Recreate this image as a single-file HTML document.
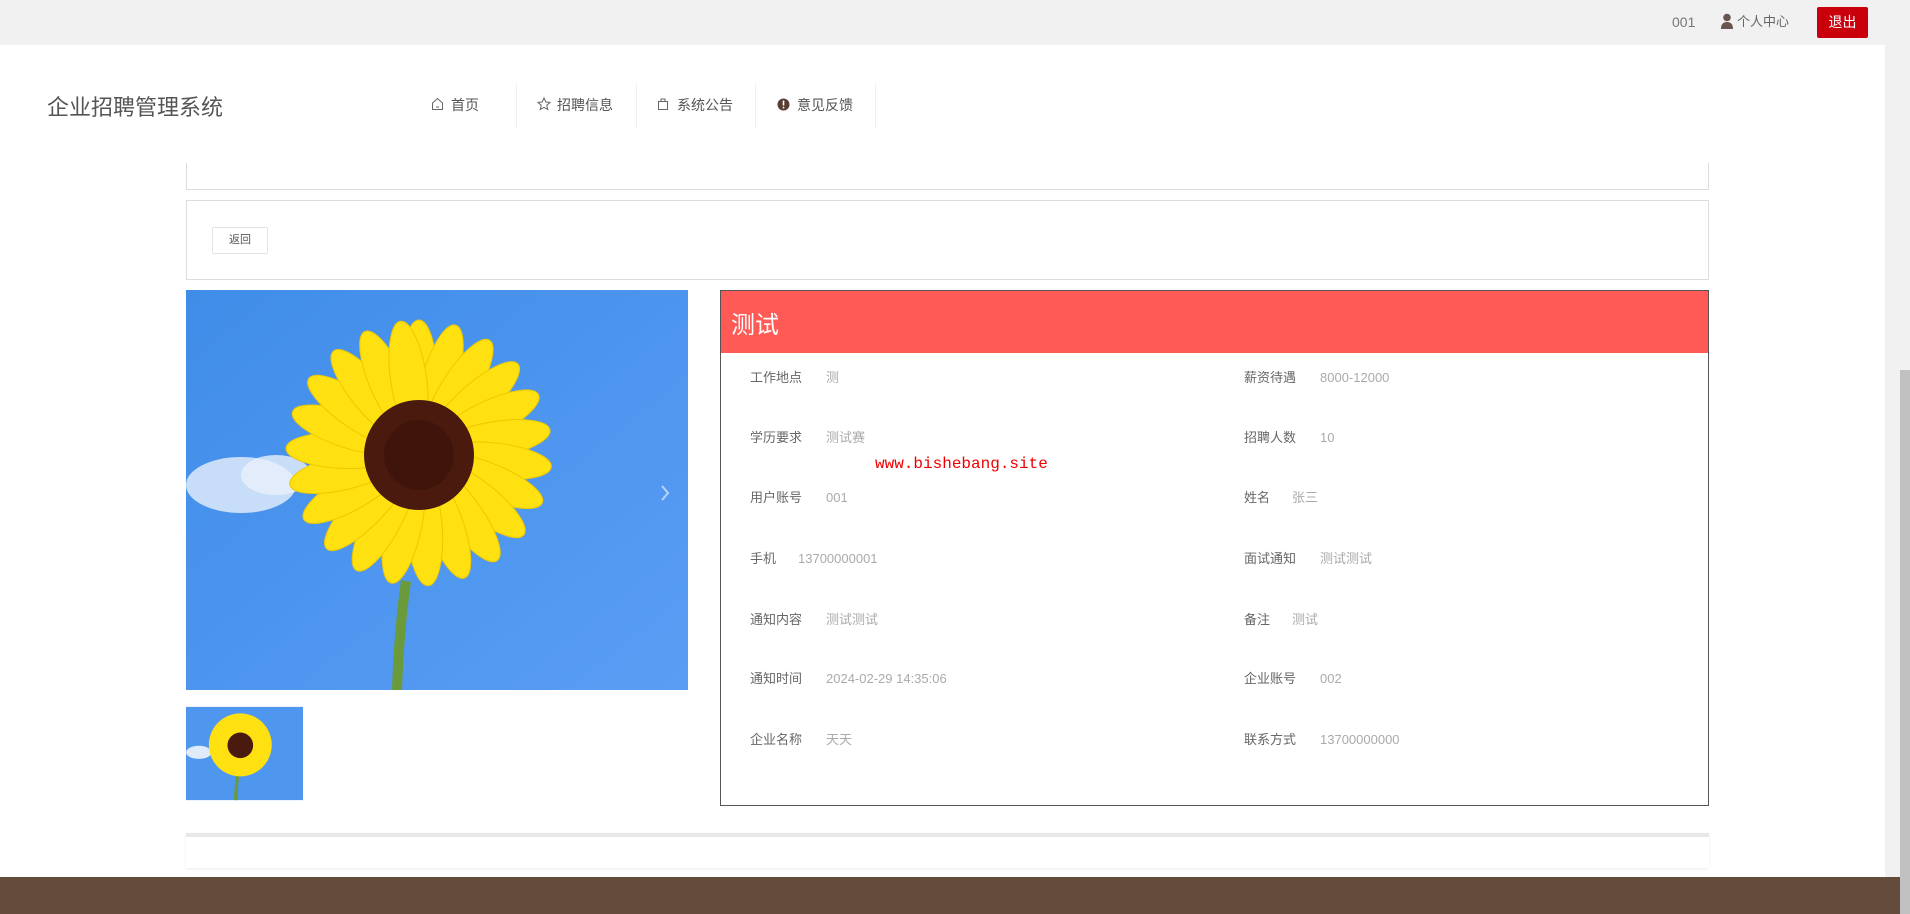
<!DOCTYPE html>
<html><head><meta charset="utf-8"><style>
*{margin:0;padding:0;box-sizing:border-box}
body{width:1910px;height:914px;overflow:hidden;background:#fff;font-family:"Liberation Sans","Noto Sans CJK SC",sans-serif;position:relative;color:#666}
.abs{position:absolute}
.top{left:0;top:0;width:1910px;height:45px;background:#f1f1f1}
.nav{font-size:14px;color:#555;top:95px;height:20px;line-height:20px}
.sep{top:84px;width:1px;height:44px;background:#f0f0f0}
.lbl,.val{font-size:13px;line-height:20px;height:20px;white-space:nowrap}
.lbl{color:#666}
.val{color:#aaa}
</style></head><body>
<div class="abs top"></div>
<div class="abs" style="left:1672px;top:12px;font-size:14px;line-height:20px;color:#777">001</div>
<svg class="abs" style="left:1720px;top:13px" width="14" height="16" viewBox="0 0 14 16"><circle cx="7" cy="4.5" r="3.8" fill="#6a5550"/><path d="M1 16 Q1 9 7 9 Q13 9 13 16Z" fill="#6a5550"/></svg>
<div class="abs" style="left:1737px;top:12px;font-size:13px;line-height:20px;color:#666">个人中心</div>
<div class="abs" style="left:1817px;top:7px;width:51px;height:31px;background:#c9000c;color:#fff;font-size:14px;line-height:31px;text-align:center;border-radius:2px">退出</div>
<div class="abs" style="left:1885px;top:45px;width:25px;height:869px;background:#f1f1f1"></div>
<div class="abs" style="left:1900px;top:370px;width:10px;height:544px;background:#c1c1c1"></div>

<div class="abs" style="left:47px;top:90px;font-size:22px;color:#555">企业招聘管理系统</div>
<svg class="abs" style="left:431px;top:97px" width="13" height="14" viewBox="0 0 13 14"><path d="M1.5 6 L6.5 1.5 L11.5 6 V12.5 H1.5Z M5 10h3" fill="none" stroke="#666" stroke-width="1"/></svg>
<div class="abs nav" style="left:451px">首页</div>
<div class="abs sep" style="left:516px"></div>
<svg class="abs" style="left:537px;top:97px" width="14" height="14" viewBox="0 0 14 14"><path d="M7 1 L8.8 5 L13 5.4 L9.8 8.2 L10.8 12.6 L7 10.3 L3.2 12.6 L4.2 8.2 L1 5.4 L5.2 5Z" fill="none" stroke="#666" stroke-width="1"/></svg>
<div class="abs nav" style="left:557px">招聘信息</div>
<div class="abs sep" style="left:636px"></div>
<svg class="abs" style="left:657px;top:97px" width="12" height="14" viewBox="0 0 12 14"><path d="M1.5 4.5 H10.5 V12.5 H1.5Z M4 4.5 V2 H8 V4.5" fill="none" stroke="#666" stroke-width="1"/></svg>
<div class="abs nav" style="left:677px">系统公告</div>
<div class="abs sep" style="left:755px"></div>
<svg class="abs" style="left:777px;top:98px" width="13" height="13" viewBox="0 0 13 13"><circle cx="6.5" cy="6.5" r="6" fill="#5a3c34"/><rect x="5.7" y="2.5" width="1.6" height="5" fill="#fff"/><rect x="5.7" y="8.8" width="1.6" height="1.6" fill="#fff"/></svg>
<div class="abs nav" style="left:797px">意见反馈</div>
<div class="abs sep" style="left:875px"></div>

<div class="abs" style="left:186px;top:163px;width:1523px;height:27px;border:1px solid #ddd;border-top:none"></div>
<div class="abs" style="left:186px;top:200px;width:1523px;height:80px;border:1px solid #ddd"></div>
<div class="abs" style="left:212px;top:227px;width:56px;height:27px;border:1px solid #e3e3e3;border-radius:2px;font-size:11px;line-height:25px;text-align:center;color:#555">返回</div>

<svg class="abs" style="left:186px;top:290px" width="502" height="400" viewBox="0 0 502 400">
<defs><linearGradient id="sky" x1="0" y1="0" x2="1" y2="1"><stop offset="0" stop-color="#3f8de8"/><stop offset="1" stop-color="#5a9df5"/></linearGradient></defs>
<rect width="502" height="400" fill="url(#sky)"/>
<ellipse cx="55" cy="195" rx="55" ry="28" fill="#dfeafa" opacity=".85"/>
<ellipse cx="90" cy="185" rx="35" ry="20" fill="#e8f0fb" opacity=".8"/>
<path d="M215 290 Q208 340 206 400 L216 400 Q218 340 225 292Z" fill="#6a9a3a"/>
<g fill="#ffe010" stroke="#eec800" stroke-width="1">
<ellipse cx="233" cy="88" rx="18" ry="58" transform="rotate(0 233 163)"/>
<ellipse cx="233" cy="88" rx="18" ry="58" transform="rotate(16 233 163)"/>
<ellipse cx="233" cy="88" rx="18" ry="58" transform="rotate(32 233 163)"/>
<ellipse cx="233" cy="88" rx="18" ry="58" transform="rotate(48 233 163)"/>
<ellipse cx="233" cy="88" rx="18" ry="58" transform="rotate(64 233 163)"/>
<ellipse cx="233" cy="88" rx="18" ry="58" transform="rotate(80 233 163)"/>
<ellipse cx="233" cy="88" rx="18" ry="58" transform="rotate(96 233 163)"/>
<ellipse cx="233" cy="88" rx="18" ry="58" transform="rotate(112 233 163)"/>
<ellipse cx="233" cy="88" rx="18" ry="58" transform="rotate(128 233 163)"/>
<ellipse cx="233" cy="88" rx="18" ry="58" transform="rotate(144 233 163)"/>
<ellipse cx="233" cy="88" rx="18" ry="58" transform="rotate(160 233 163)"/>
<ellipse cx="233" cy="88" rx="18" ry="58" transform="rotate(176 233 163)"/>
<ellipse cx="233" cy="88" rx="18" ry="58" transform="rotate(192 233 163)"/>
<ellipse cx="233" cy="88" rx="18" ry="58" transform="rotate(208 233 163)"/>
<ellipse cx="233" cy="88" rx="18" ry="58" transform="rotate(224 233 163)"/>
<ellipse cx="233" cy="88" rx="18" ry="58" transform="rotate(240 233 163)"/>
<ellipse cx="233" cy="88" rx="18" ry="58" transform="rotate(256 233 163)"/>
<ellipse cx="233" cy="88" rx="18" ry="58" transform="rotate(272 233 163)"/>
<ellipse cx="233" cy="88" rx="18" ry="58" transform="rotate(288 233 163)"/>
<ellipse cx="233" cy="88" rx="18" ry="58" transform="rotate(304 233 163)"/>
<ellipse cx="233" cy="88" rx="18" ry="58" transform="rotate(320 233 163)"/>
<ellipse cx="233" cy="88" rx="18" ry="58" transform="rotate(336 233 163)"/>
<ellipse cx="233" cy="88" rx="18" ry="58" transform="rotate(352 233 163)"/>
</g>
<circle cx="233" cy="165" r="55" fill="#4a1a0e"/>
<circle cx="233" cy="165" r="35" fill="#3a140a" opacity=".7"/>
<path d="M476 196 L482 203 L476 210" fill="none" stroke="#b8d4f8" stroke-width="2"/>
</svg>
<svg class="abs" style="left:186px;top:704px" width="117" height="99" viewBox="0 0 502 400">
<rect width="502" height="400" fill="#4f96ee"/>
<ellipse cx="55" cy="195" rx="55" ry="28" fill="#dfeafa"/>
<path d="M215 290 Q208 340 206 400 L222 400 Q222 340 228 292Z" fill="#6a9a3a"/>
<circle cx="233" cy="163" r="135" fill="#ffe010"/>
<circle cx="233" cy="165" r="55" fill="#4a1a0e"/>
</svg>

<div class="abs" style="left:720px;top:290px;width:989px;height:516px;border:1px solid #555"></div>
<div class="abs" style="left:721px;top:291px;width:987px;height:62px;background:#ff5a55"></div>
<div class="abs" style="left:731px;top:305px;font-size:24px;color:#fff">测试</div>

<div class="abs lbl" style="left:750px;top:368px">工作地点</div><div class="abs val" style="left:826px;top:368px">测</div>
<div class="abs lbl" style="left:1244px;top:368px">薪资待遇</div><div class="abs val" style="left:1320px;top:368px">8000-12000</div>
<div class="abs lbl" style="left:750px;top:428px">学历要求</div><div class="abs val" style="left:826px;top:428px">测试赛</div>
<div class="abs lbl" style="left:1244px;top:428px">招聘人数</div><div class="abs val" style="left:1320px;top:428px">10</div>
<div class="abs" style="left:875px;top:455px;font-family:'Liberation Mono',monospace;font-size:16px;color:#e00">www.bishebang.site</div>
<div class="abs lbl" style="left:750px;top:488px">用户账号</div><div class="abs val" style="left:826px;top:488px">001</div>
<div class="abs lbl" style="left:1244px;top:488px">姓名</div><div class="abs val" style="left:1292px;top:488px">张三</div>
<div class="abs lbl" style="left:750px;top:549px">手机</div><div class="abs val" style="left:798px;top:549px">13700000001</div>
<div class="abs lbl" style="left:1244px;top:549px">面试通知</div><div class="abs val" style="left:1320px;top:549px">测试测试</div>
<div class="abs lbl" style="left:750px;top:610px">通知内容</div><div class="abs val" style="left:826px;top:610px">测试测试</div>
<div class="abs lbl" style="left:1244px;top:610px">备注</div><div class="abs val" style="left:1292px;top:610px">测试</div>
<div class="abs lbl" style="left:750px;top:669px">通知时间</div><div class="abs val" style="left:826px;top:669px">2024-02-29 14:35:06</div>
<div class="abs lbl" style="left:1244px;top:669px">企业账号</div><div class="abs val" style="left:1320px;top:669px">002</div>
<div class="abs lbl" style="left:750px;top:730px">企业名称</div><div class="abs val" style="left:826px;top:730px">天天</div>
<div class="abs lbl" style="left:1244px;top:730px">联系方式</div><div class="abs val" style="left:1320px;top:730px">13700000000</div>

<div class="abs" style="left:186px;top:833px;width:1523px;height:35px;border-top:4px solid #e8e8ea;box-shadow:0 1px 3px rgba(0,0,0,.08)"></div>
<div class="abs" style="left:0;top:877px;width:1900px;height:37px;background:#644b3b"></div>
</body></html>
